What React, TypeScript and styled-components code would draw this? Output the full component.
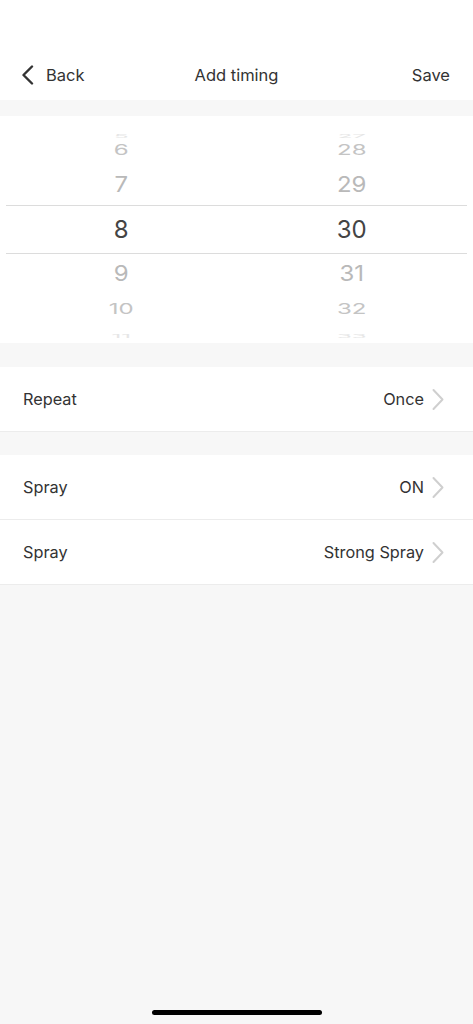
import React from 'react';
import styled, { createGlobalStyle } from 'styled-components';

const GlobalStyle = createGlobalStyle`
  html, body {
    margin: 0;
    padding: 0;
    background: #f7f7f7;
  }
  * {
    box-sizing: border-box;
  }
  body {
    font-family: Inter, "Noto Sans", sans-serif;
    -webkit-font-smoothing: antialiased;
  }
`;

const Page = styled.div`
  width: 473px;
  min-height: 1024px;
  display: flex;
  flex-direction: column;
  background: #f7f7f7;
`;

const Header = styled.header`
  height: 100px;
  padding-top: 50px;
  background: #fff;
  display: grid;
  grid-template-columns: 1fr auto 1fr;
  align-items: center;
  color: #333;
  font-size: 16.5px;
`;

const BackButton = styled.div`
  display: flex;
  align-items: center;
  gap: 12px;
  padding-left: 21px;
`;

const Title = styled.div`
  text-align: center;
`;

const SaveButton = styled.div`
  text-align: right;
  padding-right: 23px;
`;

const Gap = styled.div<{ h: number }>`
  height: ${({ h }) => h}px;
`;

const Picker = styled.section`
  height: 227px;
  background: #fff;
  padding: 8px 6px 0;
  overflow: hidden;
`;

const WheelRow = styled.div<{ h: number; selected?: boolean }>`
  height: ${({ h }) => h}px;
  display: grid;
  grid-template-columns: 1fr 1fr;
  align-items: center;
  border-top: ${({ selected }) => (selected ? '1px solid #dcdcdc' : 'none')};
  border-bottom: ${({ selected }) => (selected ? '1px solid #dcdcdc' : 'none')};
`;

const WheelCell = styled.div<{ scale: number; tone: string }>`
  text-align: center;
  font-size: 24px;
  line-height: 1;
  color: ${({ tone }) => tone};
  transform: scaleY(${({ scale }) => scale});
`;

const Group = styled.section`
  background: #fff;
`;

const Row = styled.div`
  height: 65px;
  display: flex;
  align-items: center;
  padding: 0 29px 0 23px;
  border-bottom: 1px solid #ececec;
  color: #333;
  font-size: 16.3px;
`;

const Label = styled.div`
  flex: 1;
`;

const Value = styled.div`
  margin-right: 8px;
`;

const HomeBar = styled.div`
  margin: auto auto 9px;
  width: 170px;
  height: 5px;
  border-radius: 3px;
  background: #000;
`;

const Chevron = () => (
  <svg width="12" height="23" viewBox="0 0 12 22" fill="none">
    <path d="M1.5 1.5 L10.5 11 L1.5 20.5" stroke="#cfcfcf" strokeWidth="2" strokeLinecap="round" strokeLinejoin="round" />
  </svg>
);

const BackChevron = () => (
  <svg width="13" height="20" viewBox="0 0 13 20" fill="none">
    <path d="M11 1.5 L2.5 10 L11 18.5" stroke="#333" strokeWidth="2.4" strokeLinecap="round" strokeLinejoin="round" />
  </svg>
);

const wheel = [
  { h: 11, hour: '5', min: '27', scale: 0.22, tone: '#e6e6e6' },
  { h: 29, hour: '6', min: '28', scale: 0.6, tone: '#c4c4c4' },
  { h: 41, hour: '7', min: '29', scale: 0.88, tone: '#b9b9b9' },
  { h: 49, hour: '8', min: '30', scale: 1, tone: '#444', selected: true },
  { h: 39, hour: '9', min: '31', scale: 0.88, tone: '#b9b9b9' },
  { h: 31, hour: '10', min: '32', scale: 0.6, tone: '#c4c4c4' },
  { h: 7, hour: '11', min: '33', scale: 0.2, tone: '#e6e6e6' },
];

export default function App() {
  return (
    <>
      <GlobalStyle />
      <Page>
        <Header>
          <BackButton>
            <BackChevron />
            <span>Back</span>
          </BackButton>
          <Title>Add timing</Title>
          <SaveButton>Save</SaveButton>
        </Header>
        <Gap h={16} />
        <Picker>
          {wheel.map((w) => (
            <WheelRow key={w.hour} h={w.h} selected={w.selected}>
              <WheelCell scale={w.scale} tone={w.tone}>{w.hour}</WheelCell>
              <WheelCell scale={w.scale} tone={w.tone}>{w.min}</WheelCell>
            </WheelRow>
          ))}
        </Picker>
        <Gap h={24} />
        <Group>
          <Row>
            <Label>Repeat</Label>
            <Value>Once</Value>
            <Chevron />
          </Row>
        </Group>
        <Gap h={23} />
        <Group>
          <Row>
            <Label>Spray</Label>
            <Value>ON</Value>
            <Chevron />
          </Row>
          <Row>
            <Label>Spray</Label>
            <Value>Strong Spray</Value>
            <Chevron />
          </Row>
        </Group>
        <HomeBar />
      </Page>
    </>
  );
}
